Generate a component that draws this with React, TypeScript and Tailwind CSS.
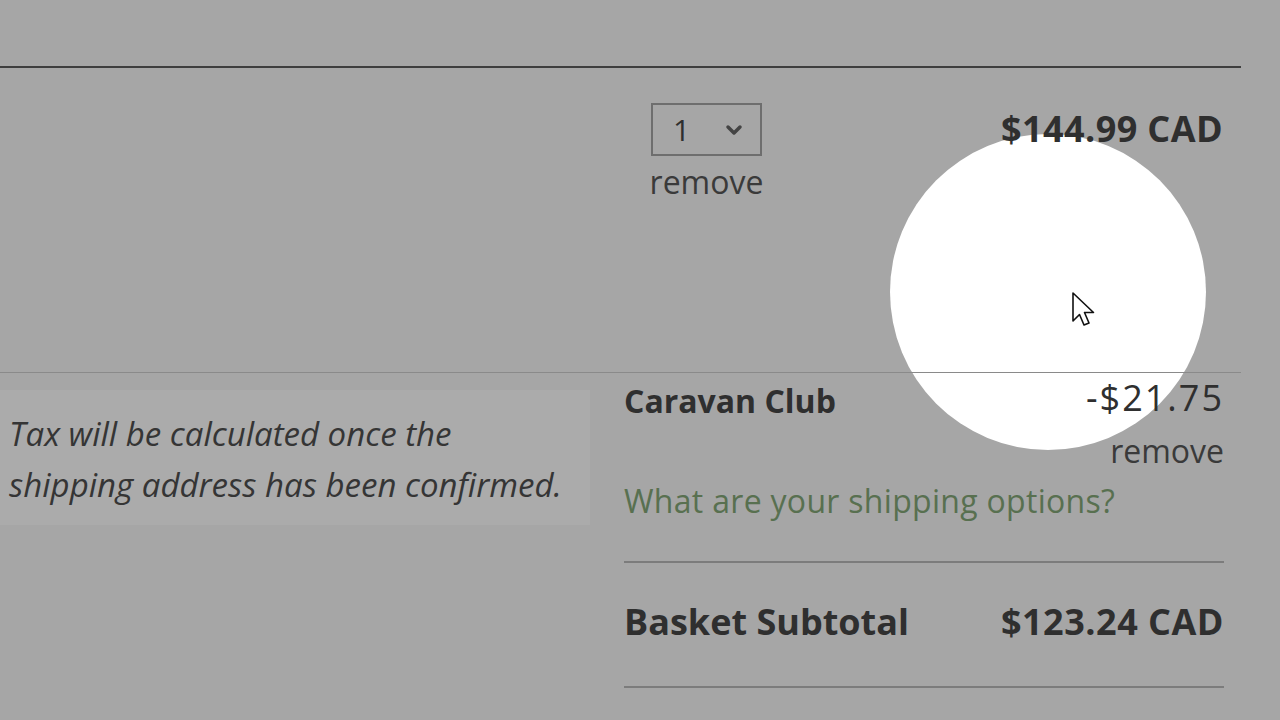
import { ChevronDown } from 'lucide-react'

const font = { fontFamily: '"Open Sans", "Noto Sans", sans-serif' }

function Cursor() {
  return (
    <svg width="28" height="40" viewBox="0 0 28 40" className="absolute left-[1071px] top-[291px]">
      <path
        d="M2 2 L2 30 L8.5 23.5 L13 34 L18 32 L13.5 21.5 L22.5 21.5 Z"
        fill="white"
        stroke="#111"
        strokeWidth="1.6"
        strokeLinejoin="round"
      />
    </svg>
  )
}

export default function App() {
  return (
    <div className="relative h-[720px] w-[1280px] overflow-hidden bg-[#a6a6a6] text-[#2f2f2f]" style={font}>
      {/* spotlight */}
      <div className="absolute left-[890px] top-[134px] h-[316px] w-[316px] rounded-full bg-white" />

      <div className="relative pt-[66px]">
        <div className="flex h-[307px] w-[1241px] border-t-2 border-b border-t-[#3e3e3e] border-b-[#8a8a8a]">
          <div className="w-[651px]" />
          <div className="mt-[35px] flex w-[111px] flex-col items-center">
            <div className="flex h-[53px] w-[111px] items-center justify-between border-2 border-[#6e6e6e] pl-[20px] pr-[14px] text-[30px]">
              <span>1</span>
              <ChevronDown size={24} strokeWidth={3.5} className="text-[#444]" />
            </div>
            <span className="mt-[8px] text-[32px] leading-[36px] text-[#3a3a3a]">remove</span>
          </div>
          <div className="flex-1 pr-[18px] pt-[41px] text-right text-[36px] font-bold leading-[40px] tracking-[0.4px]">
            $144.99 CAD
          </div>
        </div>

        <div className="flex">
          <div className="mt-[17px] h-[135px] w-[590px] bg-[#ababab] px-[9px] pt-[18px] text-[33px] italic leading-[51px] text-[#353535]">
            Tax will be calculated once the
            <br />
            shipping address has been confirmed.
          </div>

          <div className="ml-[34px] w-[600px]">
            <div className="flex justify-between pt-[8px]">
              <span className="text-[32px] font-bold leading-[40px]">Caravan Club</span>
              <span className="-mt-[3px] text-[36px] leading-[40px] tracking-[2px]">-$21.75</span>
            </div>
            <div className="mt-[10px] text-right text-[32px] leading-[40px] text-[#3a3a3a]">remove</div>
            <div className="mt-[10px] text-[32px] leading-[40px] tracking-[0.3px] text-[#587050]">
              What are your shipping options?
            </div>
            <div className="mt-[40px] border-t-2 border-[#7c7c7c]" />
            <div className="flex h-[123px] items-center justify-between pb-[6px] text-[36px] font-bold">
              <span>Basket Subtotal</span>
              <span className="tracking-[0.5px]">$123.24 CAD</span>
            </div>
            <div className="border-t-2 border-[#7c7c7c]" />
          </div>
        </div>
      </div>

      <Cursor />
    </div>
  )
}
